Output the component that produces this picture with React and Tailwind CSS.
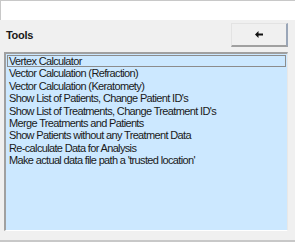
import React from 'react'

const items = [
  'Vertex Calculator',
  'Vector Calculation (Refraction)',
  'Vector Calculation (Keratomety)',
  "Show List of Patients, Change Patient ID's",
  "Show List of Treatments, Change Treatment ID's",
  'Merge Treatments and Patients',
  'Show Patients without any Treatment Data',
  'Re-calculate Data for Analysis',
  "Make actual data file path a 'trusted location'",
]

export default function App() {
  return (
    <div
      className="flex h-[242px] w-[295px] flex-col overflow-hidden bg-[#f0f0f0] text-[11px] text-[#1a1a1a]"
      style={{ fontFamily: '"Liberation Sans", Arial, sans-serif' }}
    >
      <div className="h-[20px] shrink-0 border-t border-l border-[#c8c8c8] bg-white" />

      <div className="flex h-[32px] shrink-0 items-start justify-between pl-[6px] pr-[7px] pt-[3px]">
        <span className="mt-[4px] text-[11px] font-bold tracking-[-0.3px]">Tools</span>
        <button className="flex h-[24px] w-[57px] items-center justify-center border-t border-l border-r-2 border-b-2 border-t-[#e3e3e3] border-l-[#e3e3e3] border-r-[#9aa6b8] border-b-[#a0a0a0] bg-[#f0f0f0]">
          <svg width="8" height="7" viewBox="0 0 8 7">
            <path d="M0 3.5 L3.5 0 L3.5 2.5 L8 2.5 L8 4.5 L3.5 4.5 L3.5 7 Z" fill="#111" />
          </svg>
        </button>
      </div>

      <div className="mx-[4px] h-[179px] w-[284px] shrink-0 border-t-2 border-l-2 border-r border-b border-t-[#a0a0a0] border-l-[#a0a0a0] border-r-[#e8e8e8] border-b-[#ffffff] bg-[#cce8ff] pt-[1px] tracking-[-0.65px]">
        {items.map((t, i) => (
          <div
            key={t}
            className={
              i === 0
                ? 'mx-[1px] h-[12.4px] border border-[#8c8c8c] pl-[1px] leading-[10.4px]'
                : 'h-[12.4px] pl-[3px] leading-[12.4px] whitespace-nowrap'
            }
          >
            {t}
          </div>
        ))}
      </div>

      <div className="mt-[9px] h-[2px] shrink-0 bg-[#c8c8c8]" />
    </div>
  )
}
